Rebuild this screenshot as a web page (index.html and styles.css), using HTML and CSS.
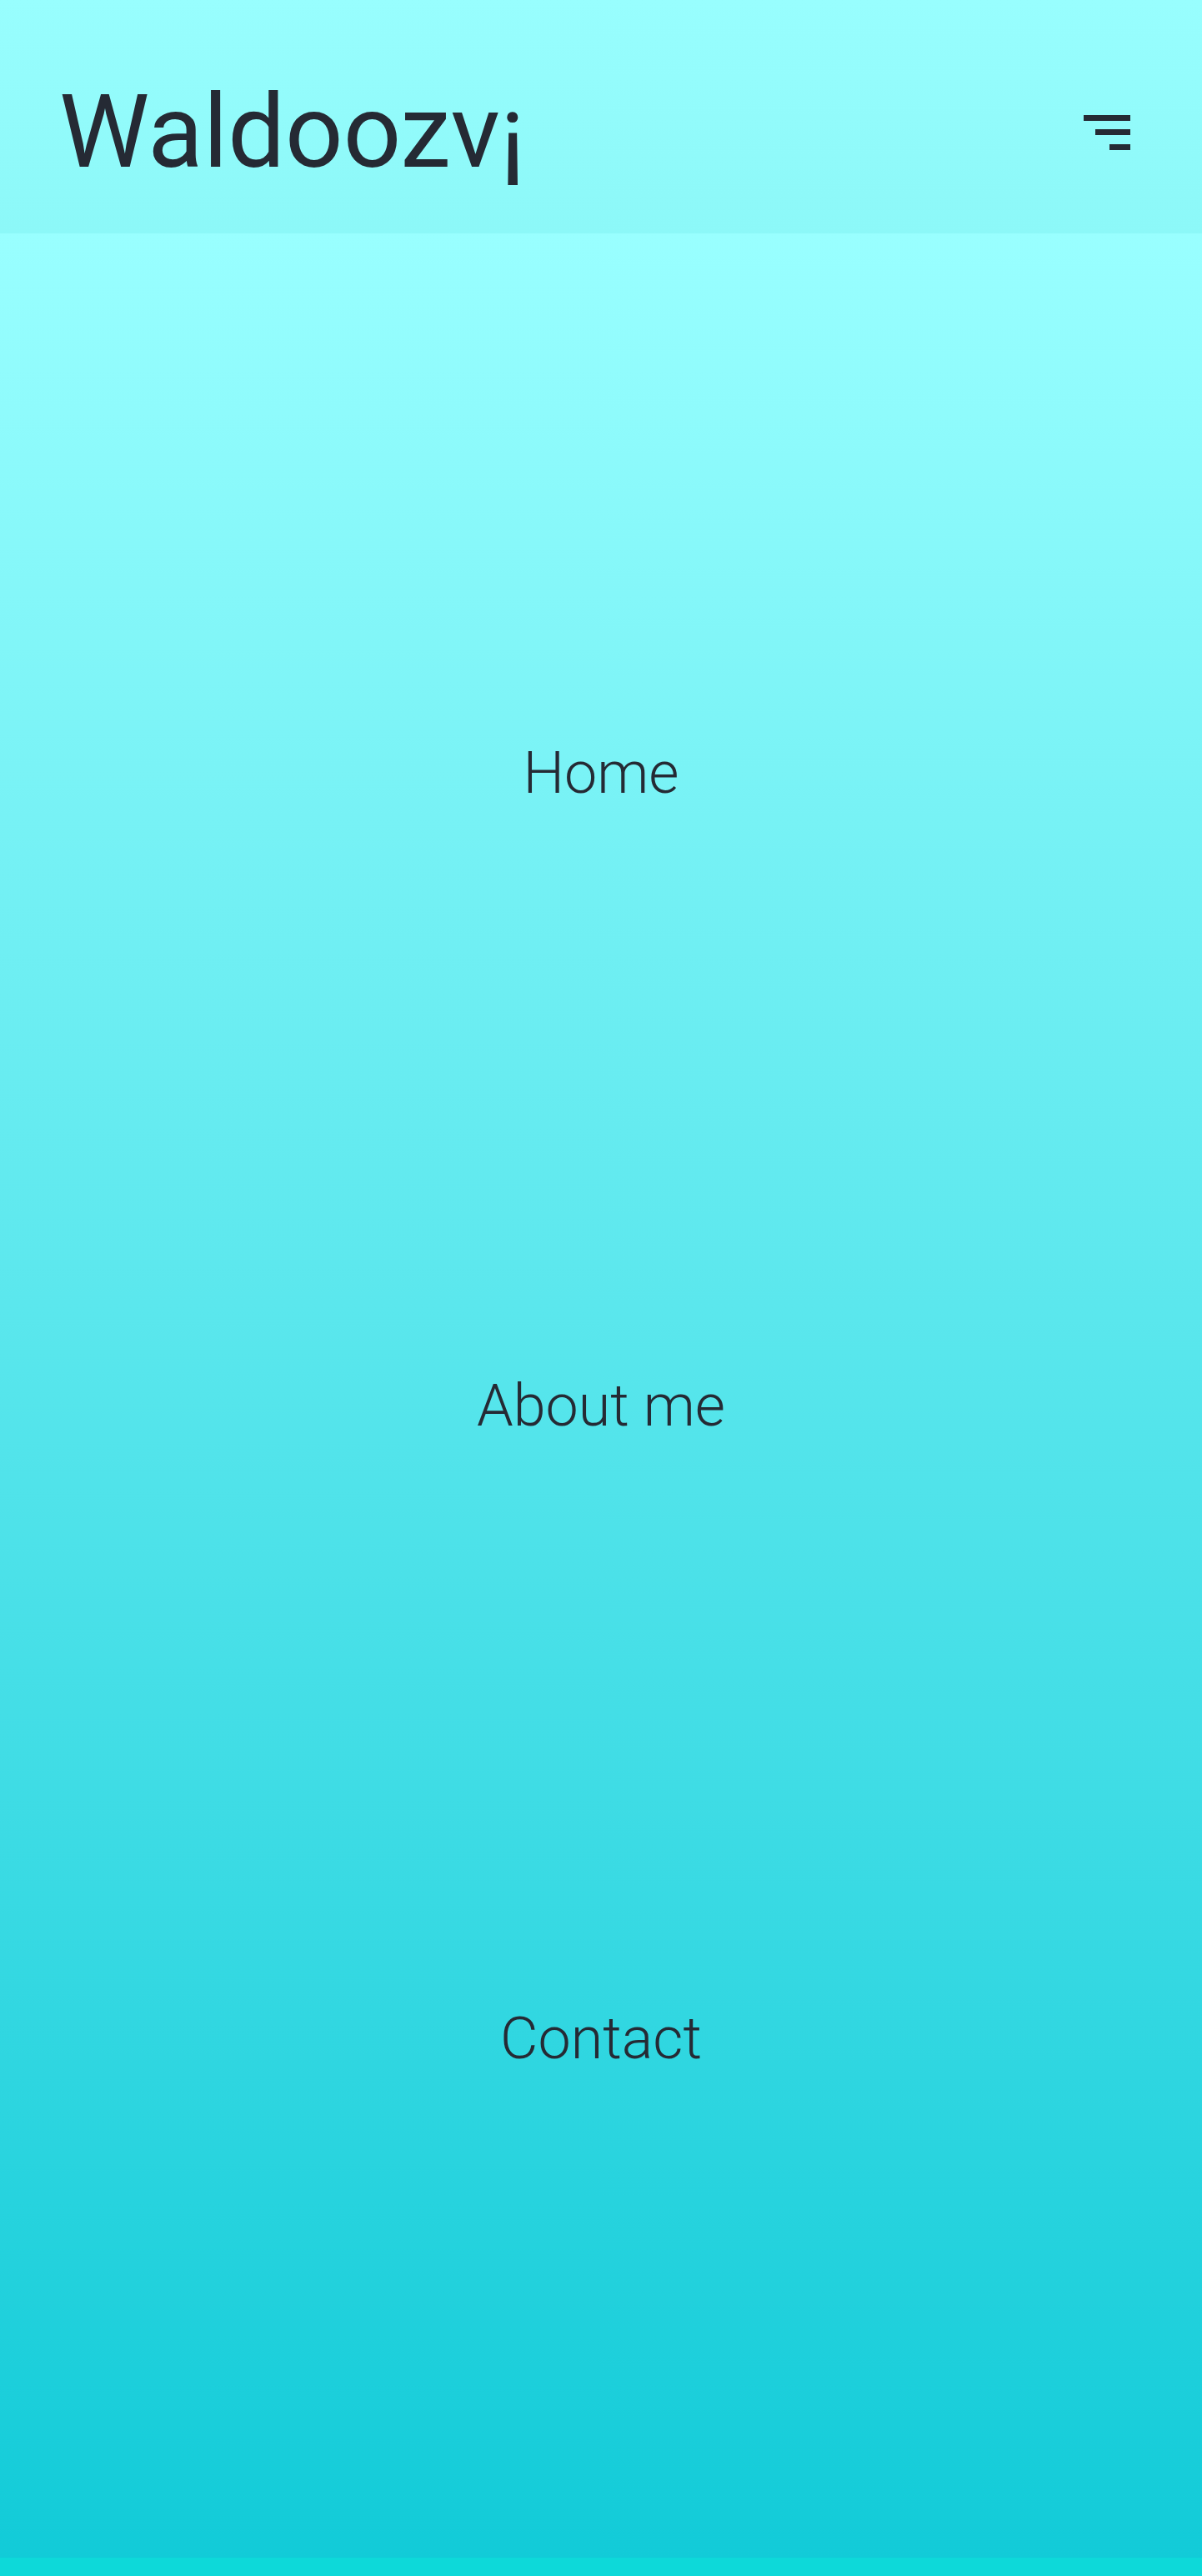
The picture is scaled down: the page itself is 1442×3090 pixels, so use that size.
FILE: index.html
```html
<!DOCTYPE html>
<html lang="en">
<head>
<meta charset="utf-8">
<title>Waldoozv¡</title>
<link rel="stylesheet" href="styles.css">
</head>
<body>
<header class="header">
  <a class="logo" href="#">Waldoozv¡</a>
  <button class="menu-btn" aria-label="Menu">
    <span class="bar bar-1"></span>
    <span class="bar bar-2"></span>
    <span class="bar bar-3"></span>
  </button>
</header>
<main class="overlay">
  <nav class="nav">
    <ul class="nav-list">
      <li class="nav-item"><a class="nav-link" href="#">Home</a></li>
      <li class="nav-item"><a class="nav-link" href="#">About me</a></li>
      <li class="nav-item"><a class="nav-link" href="#">Contact</a></li>
    </ul>
  </nav>
</main>
<div class="strip"></div>
</body>
</html>
```
FILE: styles.css
```css
* { box-sizing: border-box; }
html, body { margin: 0; padding: 0; }
body {
  font-family: Roboto, "Liberation Sans", sans-serif;
  color: #252a34;
  background: #0dd9d9;
}
.header {
  height: 280px;
  display: flex;
  align-items: center;
  justify-content: space-between;
  padding: 37px 86px 0 71px;
  background: linear-gradient(to bottom, #98fefe, #8cf8f8);
}
.logo {
  font-size: 122px;
  font-weight: 400;
  line-height: 1;
  color: #252a34;
  text-decoration: none;
}
.menu-btn {
  display: flex;
  flex-direction: column;
  align-items: flex-end;
  gap: 10.5px;
  background: none;
  border: 0;
  padding: 0;
  width: 56px;
}
.bar {
  display: block;
  height: 7px;
  background: #252a34;
}
.bar-1 { width: 56px; }
.bar-2 { width: 42px; }
.bar-3 { width: 25px; }
.overlay {
  height: 2788px;
  background: linear-gradient(to bottom, #99ffff, #12cbd8);
  display: flex;
  flex-direction: column;
  justify-content: center;
  padding-top: 24px;
}
.nav-list {
  list-style: none;
  margin: 0;
  padding: 0;
  display: flex;
  flex-direction: column;
}
.nav-item {
  height: 759px;
  display: flex;
  align-items: center;
  justify-content: center;
}
.nav-link {
  font-size: 70px;
  font-weight: 300;
  color: #252a34;
  text-decoration: none;
}
.strip {
  height: 22px;
  background: #0dd9d9;
}
```
